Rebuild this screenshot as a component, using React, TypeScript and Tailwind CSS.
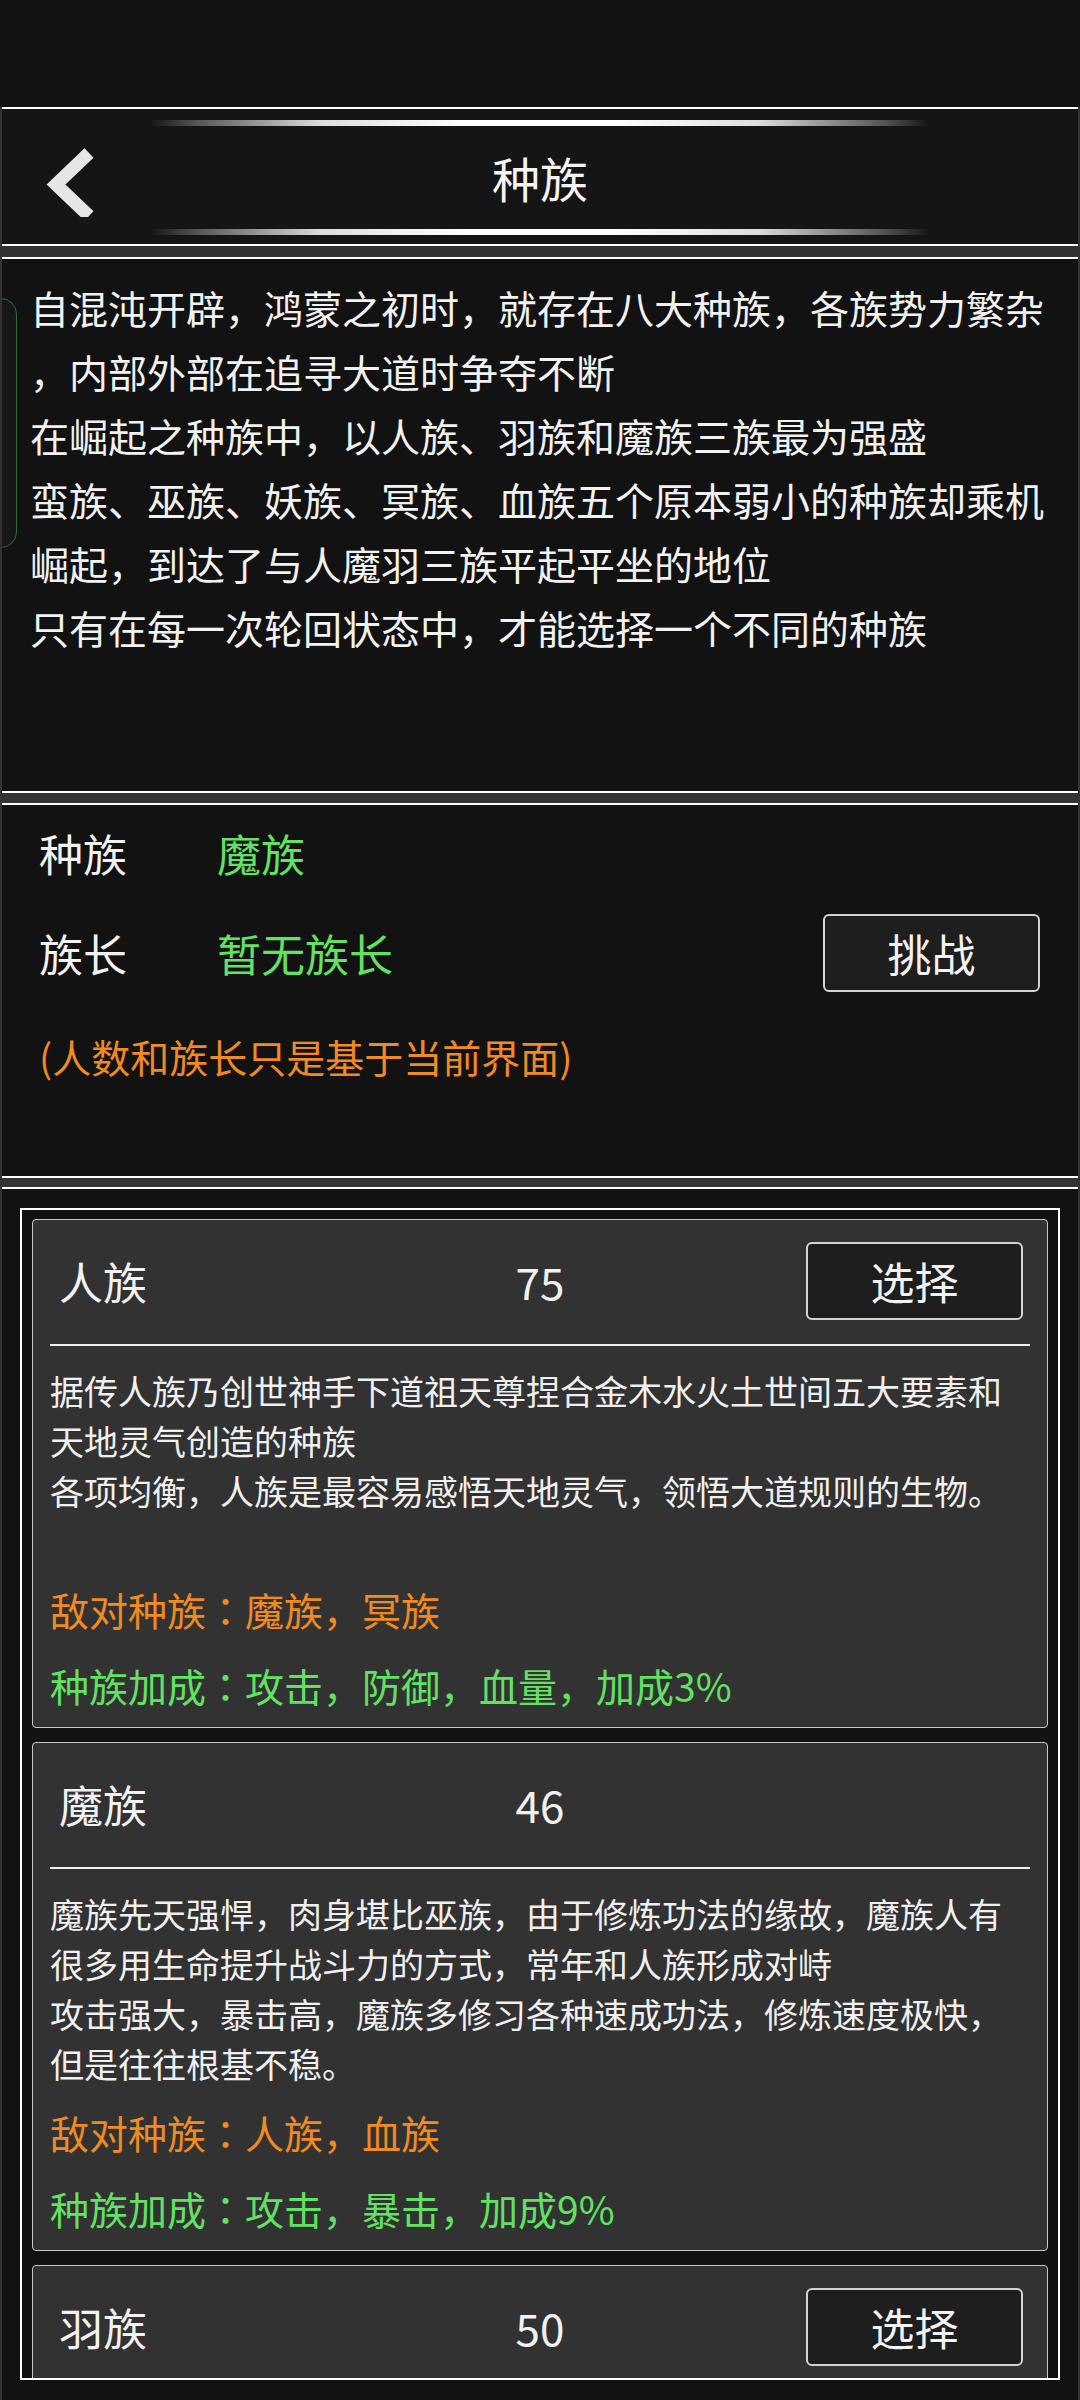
import React from 'react'

type Race = {
  name: string
  count: number
  canSelect: boolean
  desc: string[]
  enemy?: string
  bonus?: string
}

const intro = [
  '自混沌开辟，鸿蒙之初时，就存在八大种族，各族势力繁杂',
  '，内部外部在追寻大道时争夺不断',
  '在崛起之种族中，以人族、羽族和魔族三族最为强盛',
  '蛮族、巫族、妖族、冥族、血族五个原本弱小的种族却乘机',
  '崛起，到达了与人魔羽三族平起平坐的地位',
  '只有在每一次轮回状态中，才能选择一个不同的种族',
]

const races: Race[] = [
  {
    name: '人族',
    count: 75,
    canSelect: true,
    desc: [
      '据传人族乃创世神手下道祖天尊捏合金木水火土世间五大要素和',
      '天地灵气创造的种族',
      '各项均衡，人族是最容易感悟天地灵气，领悟大道规则的生物。',
      '',
    ],
    enemy: '魔族，冥族',
    bonus: '攻击，防御，血量，加成3%',
  },
  {
    name: '魔族',
    count: 46,
    canSelect: false,
    desc: [
      '魔族先天强悍，肉身堪比巫族，由于修炼功法的缘故，魔族人有',
      '很多用生命提升战斗力的方式，常年和人族形成对峙',
      '攻击强大，暴击高，魔族多修习各种速成功法，修炼速度极快，',
      '但是往往根基不稳。',
    ],
    enemy: '人族，血族',
    bonus: '攻击，暴击，加成9%',
  },
  // only the top row of this one is on screen
  { name: '羽族', count: 50, canSelect: true, desc: [] },
]

// centred full-width colon, as the device font draws it
const Colon = () => <span className="font-['Noto_Sans_CJK_JP',sans-serif]">：</span>

function RaceCard({ race }: { race: Race }) {
  return (
    <div className="shrink-0 rounded-[4px] border border-[#c8c8c8] bg-[#323232] px-[17px] pt-[22px] pb-[4px]">
      <div className="relative flex h-[78px] items-center">
        <span className="pl-[9px] text-[44px] text-[#f2f2f2]">{race.name}</span>
        <span className="absolute left-1/2 -translate-x-1/2 text-[44px] text-[#f2f2f2]">{race.count}</span>
        {race.canSelect && (
          <div className="ml-auto mr-[7px] flex h-[78px] w-[217px]">
            <button className="flex h-full w-full items-center justify-center rounded-[6px] border-2 border-[#d4d4d4] bg-[#1e1e1e] text-[44px] text-[#f2f2f2]">
              选择
            </button>
          </div>
        )}
      </div>
      <div className="mt-[24px] h-[2px] bg-[#f0f0f0]" />
      <div className="mt-[20px] min-h-[50px] text-[34px] leading-[50px] text-[#f0f0f0]">
        {race.desc.map((line, i) => (
          <div key={i} className="h-[50px] whitespace-nowrap">{line}</div>
        ))}
      </div>
      {race.enemy && (
        <div className="mt-[5px] text-[39px]">
          <div className="flex h-[76px] items-center text-[#f08a22]">
            <span>敌对种族<Colon />{race.enemy}</span>
          </div>
          <div className="flex h-[76px] items-center text-[#62e262]">
            <span>种族加成<Colon />{race.bonus}</span>
          </div>
        </div>
      )}
    </div>
  )
}

export default function App() {
  return (
    <div className="flex h-[2400px] w-[1080px] flex-col overflow-hidden bg-[#333333] font-['Noto_Sans_CJK_SC','Noto_Sans',sans-serif] text-[#f2f2f2]">
      <div className="h-[107px] shrink-0 bg-[#121212]" />

      {/* header */}
      <div className="relative mx-[2px] flex h-[139px] shrink-0 items-center justify-center border-y-2 border-white bg-[#151515]">
        <div className="absolute left-1/2 top-[11px] h-[6px] w-[780px] -translate-x-1/2 rounded-full bg-[linear-gradient(90deg,transparent,#555_6%,#ddd_22%,#fff_40%,#fff_60%,#ddd_78%,#555_94%,transparent)]" />
        <div className="absolute left-1/2 top-[120px] h-[6px] w-[780px] -translate-x-1/2 rounded-full bg-[linear-gradient(90deg,transparent,#555_6%,#ddd_22%,#fff_40%,#fff_60%,#ddd_78%,#555_94%,transparent)]" />
        <svg className="absolute left-[26px] top-[28px]" width="80" height="80" viewBox="0 0 80 80">
          <polyline points="61,16 28,47.5 61,79" fill="none" stroke="#e6e6e6" strokeWidth="13" strokeLinejoin="miter" strokeLinecap="butt" />
        </svg>
        <span className="text-[48px] leading-none text-[#f4f4f4]">种族</span>
      </div>

      {/* intro */}
      <div className="relative mx-[2px] mt-[11px] h-[536px] shrink-0 overflow-hidden border-y-2 border-white bg-[#121212] pl-[28px] pt-[16px]">
        <div className="absolute left-[-22px] top-[39px] h-[250px] w-[37px] rounded-[16px] border-[1.5px] border-[#2f6d38] bg-[#171717]" />
        <div className="relative text-[39px] leading-[64px] text-[#f2f2f2]">
          {intro.map((line, i) => (
            <div key={i} className="h-[64px] whitespace-nowrap">{line}</div>
          ))}
        </div>
      </div>

      {/* current race */}
      <div className="mx-[2px] mt-[10px] h-[375px] shrink-0 border-y-2 border-white bg-[#121212] px-[37px] pt-[10px]">
        <div className="flex h-[76px] items-center text-[44px]">
          <span className="w-[178px]">种族</span>
          <span className="text-[#62e262]">魔族</span>
        </div>
        <div className="mt-[23px] flex h-[78px] items-center text-[44px]">
          <span className="w-[178px]">族长</span>
          <span className="text-[#62e262]">暂无族长</span>
          <div className="ml-auto mr-[1px] flex h-[78px] w-[217px]">
            <button className="flex h-full w-full items-center justify-center rounded-[6px] border-2 border-[#d4d4d4] bg-[#1e1e1e] text-[44px] text-[#f2f2f2]">
              挑战
            </button>
          </div>
        </div>
        <div className="mt-[39px] flex h-[50px] items-center text-[39px] text-[#f08a22]">(人数和族长只是基于当前界面)</div>
      </div>

      {/* race list */}
      <div className="mx-[2px] mt-[9px] flex min-h-0 flex-1 flex-col border-t-2 border-white bg-[#121212] px-[18px] pt-[19px] pb-[20px]">
        <div className="flex min-h-0 flex-1 flex-col gap-[14px] overflow-hidden border-2 border-white px-[10px] pt-[9px]">
          {races.map((r) => (
            <RaceCard key={r.name} race={r} />
          ))}
        </div>
      </div>
    </div>
  )
}
